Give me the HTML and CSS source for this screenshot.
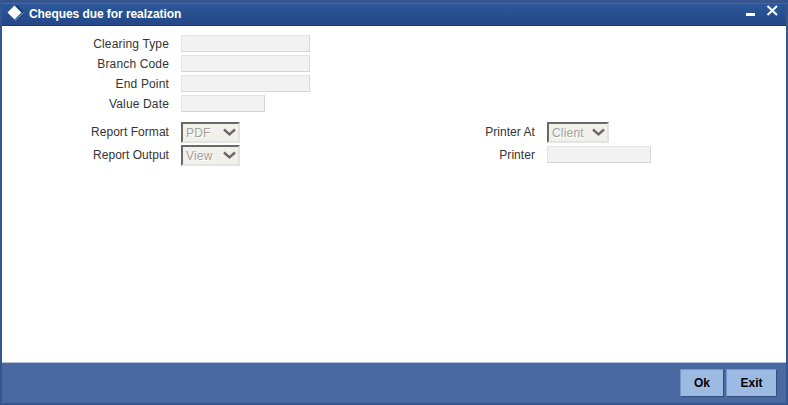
FILE: index.html
```
<!DOCTYPE html>
<html lang="en">
<head>
    <meta charset="UTF-8">
    <title>Cheques due for realzation</title>
    <link rel="stylesheet" href="styles.css">
</head>
<body>
    <div class="window">
        <header class="titlebar">
            <svg class="logo" width="18" height="18" viewBox="0 0 18 18">
                <path d="M8 0.500H10.500L17 7.500L9 15Z" fill="#08406f"/>
                <path d="M8 15.500L16.500 7.500" stroke="#8faed0" fill="none"/>
                <path d="M7.500 0.500L14.500 7.500L7.500 14.500L0.500 7.500Z" fill="#fff"/>
            </svg>
            <h1>Cheques due for realzation</h1>
            <svg class="controls" width="34" height="18" viewBox="0 0 34 18">
                <path d="M1 9H10V12H1Z" fill="#fff"/>
                <path d="M22.500 2L32 11M32 2L22.500 11" stroke="#fff" stroke-width="2" fill="none"/>
            </svg>
        </header>
        <main>
            <div class="fields">
                <label for="clearing">Clearing Type</label>
                <input id="clearing" class="text" disabled>
                <label for="branch">Branch Code</label>
                <input id="branch" class="text" disabled>
                <label for="endpoint">End Point</label>
                <input id="endpoint" class="text" disabled>
                <label for="valuedate">Value Date</label>
                <input id="valuedate" class="text date" disabled>
            </div>
            <div class="report">
                <div class="options">
                    <label>Report Format</label>
                    <div class="select">PDF
                        <svg width="13" height="9" viewBox="0 0 13 9"><path d="M1 1.500L6.500 6.500L12 1.500" stroke="#6a6a6a" stroke-width="2.400" fill="none"/></svg>
                    </div>
                    <label>Report Output</label>
                    <div class="select">View
                        <svg width="13" height="9" viewBox="0 0 13 9"><path d="M1 1.500L6.500 6.500L12 1.500" stroke="#6a6a6a" stroke-width="2.400" fill="none"/></svg>
                    </div>
                </div>
                <div class="options">
                    <label>Printer At</label>
                    <div class="select client">Client
                        <svg width="13" height="9" viewBox="0 0 13 9"><path d="M1 1.500L6.500 6.500L12 1.500" stroke="#6a6a6a" stroke-width="2.400" fill="none"/></svg>
                    </div>
                    <label for="printer">Printer</label>
                    <input id="printer" class="text printer" disabled>
                </div>
            </div>
        </main>
        <footer>
            <button>Ok</button>
            <button class="exit">Exit</button>
        </footer>
    </div>
</body>
</html>
```
FILE: styles.css
```
* {
    box-sizing: border-box;
}

body {
    margin: 0;
    font-family: Arial, "Liberation Sans", sans-serif;
    font-size: 12px;
    color: #333;
}

.window {
    display: flex;
    flex-direction: column;
    height: 405px;
    border: 2px solid #36558f;
    border-top-width: 3px;
    background-color: #fff;
}

.titlebar {
    display: flex;
    align-items: flex-start;
    height: 23px;
    padding: 0 7px 0 5px;
    border-top: 1px solid #41699f;
    border-bottom: 1px solid #1d3a78;
    background: linear-gradient(#2c5799, #244788);
}

.logo {
    flex: none;
    margin-top: 1px;
}

h1 {
    flex: 1;
    margin: 0 0 0 4px;
    font-size: 12px;
    line-height: 20px;
    letter-spacing: -0.07px;
    color: #fff;
}

main {
    flex: 1;
    padding-top: 9px;
}

.fields, .options {
    display: grid;
    grid-template-columns: 167px 1fr;
    column-gap: 12px;
}

.fields {
    grid-auto-rows: 20px;
}

.report {
    display: flex;
    margin-top: 7px;
}

.options {
    width: 366px;
    grid-auto-rows: 23px;
}

label {
    text-align: right;
    line-height: 18px;
    letter-spacing: 0.15px;
}

.options label {
    line-height: 20px;
    letter-spacing: 0.05px;
}

.text {
    width: 129px;
    height: 17px;
    padding: 0;
    border: 1px solid #e3e3e3;
    border-right-color: #d5d5d5;
    border-bottom-color: #d5d5d5;
    background-color: #f2f2f2;
}

.date {
    width: 84px;
}

.printer {
    width: 104px;
    margin-top: 1px;
}

.select {
    display: flex;
    align-items: center;
    justify-content: space-between;
    width: 59px;
    height: 21px;
    padding: 0 2px 0 3px;
    border: 2px solid #e3e3e3;
    border-top-color: #696969;
    border-left-color: #696969;
    background-color: #f1f0ea;
    color: #a0a0a0;
    text-shadow: 1px 1px 0 #fff;
    letter-spacing: 0.2px;
}

.client {
    width: 62px;
}

footer {
    display: flex;
    gap: 2px;
    justify-content: flex-end;
    height: 41px;
    padding: 6px 9px 0 0;
    border-top: 1px solid #b5c3dc;
    background-color: #4a69a1;
}

button {
    width: 44px;
    height: 28px;
    padding: 0;
    border: 1px solid #7595c8;
    border-right-color: #345078;
    border-bottom-color: #345078;
    background-color: #9dbbe2;
    font: bold 12px Arial, "Liberation Sans", sans-serif;
    color: #000;
}

.exit {
    width: 51px;
}
```
